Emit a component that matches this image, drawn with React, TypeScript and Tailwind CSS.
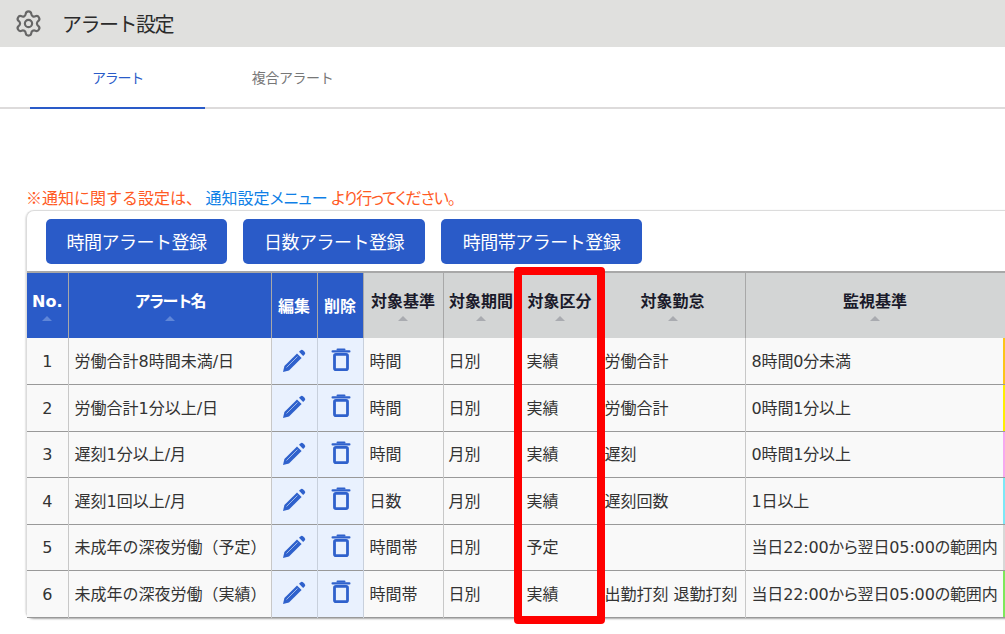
import { Settings } from 'lucide-react'

const rows = [
  { no: 1, name: '労働合計8時間未満/日', basis: '時間', period: '日別', kind: '実績', target: '労働合計', rule: '8時間0分未満', strip: 'bg-[#fcc419]' },
  { no: 2, name: '労働合計1分以上/日', basis: '時間', period: '日別', kind: '実績', target: '労働合計', rule: '0時間1分以上', strip: 'bg-[#ffee00]' },
  { no: 3, name: '遅刻1分以上/月', basis: '時間', period: '月別', kind: '実績', target: '遅刻', rule: '0時間1分以上', strip: 'bg-[#f7a8ee]' },
  { no: 4, name: '遅刻1回以上/月', basis: '日数', period: '月別', kind: '実績', target: '遅刻回数', rule: '1日以上', strip: 'bg-[#7de8f7]' },
  { no: 5, name: '未成年の深夜労働（予定）', basis: '時間帯', period: '日別', kind: '予定', target: '', rule: '当日22:00から翌日05:00の範囲内', strip: 'bg-[#d8d8d8]' },
  { no: 6, name: '未成年の深夜労働（実績）', basis: '時間帯', period: '日別', kind: '実績', target: '出勤打刻 退勤打刻', rule: '当日22:00から翌日05:00の範囲内', strip: 'bg-[#7ee85a]' },
]

const buttons = [
  { label: '時間アラート登録', width: 'w-[181px]' },
  { label: '日数アラート登録', width: 'w-[182px]' },
  { label: '時間帯アラート登録', width: 'w-[201px]' },
]

function PencilIcon() {
  return (
    <svg width="26" height="26" viewBox="0 0 26 26" fill="none">
      <path d="M2 24l1.4-6L16 5.4 20.6 10 8 22.6z" fill="#2f61cc" />
      <path d="M5.5 19.5L16.5 8.5" stroke="#9db8ea" strokeWidth="1" />
      <path d="M18 3.8l1.4-1.4a2 2 0 0 1 2.8 0l1.4 1.4a2 2 0 0 1 0 2.8L22.2 8z" fill="#2f61cc" />
    </svg>
  )
}

function TrashIcon() {
  return (
    <svg width="20" height="26" viewBox="0 0 20 26" fill="none">
      <path d="M1.6 3.4h16.8" stroke="#2f61cc" strokeWidth="2.2" strokeLinecap="round" />
      <path d="M6.5 1.4h7" stroke="#2f61cc" strokeWidth="2" strokeLinecap="round" />
      <rect x="3.5" y="6.4" width="13" height="15.2" rx="1.4" stroke="#2f61cc" strokeWidth="2.8" />
    </svg>
  )
}

function HeadCell({ label, blue, tight }: { label: string; blue?: boolean; tight?: boolean }) {
  return (
    <th
      className={`border-r border-[#a8a8a8] p-0 pt-[18px] align-top text-[16px] font-bold leading-[22px] ${
        blue ? 'bg-[#2a5bc8] text-white' : 'bg-[#d3d5d5] text-[#1a1a2a]'
      }`}
    >
      <div className={`whitespace-nowrap ${tight ? 'tracking-[-2px]' : ''}`}>{label}</div>
      <span
        className={`mx-auto mt-[3px] block h-0 w-0 border-x-[5px] border-b-[5px] border-x-transparent ${
          blue ? 'border-b-[#5f86d8]' : 'border-b-[#a9abb0]'
        }`}
      />
    </th>
  )
}

export default function App() {
  return (
    <div className="relative h-[634px] w-[1005px] overflow-hidden bg-white font-['DejaVu_Sans','Noto_Sans_CJK_JP',sans-serif] text-[#333]">
      <header className="flex h-[47px] items-center gap-[19px] bg-[#e0e0de] pl-[14px]">
        <Settings className="h-[29px] w-[29px] text-[#666]" strokeWidth={1.8} />
        <h1 className="pt-[2px] text-[20px] font-normal tracking-[-1.5px] text-[#2b2b2b]">アラート設定</h1>
      </header>

      <nav className="flex h-[62px] border-b-2 border-[#dddbdb] pl-[30px] text-[14px]">
        <div className="-mb-[2px] flex h-[62px] w-[175px] items-center justify-center border-b-2 border-[#2a5bc8] pt-[2px] tracking-[-1.2px] text-[#2a5bc8]">
          アラート
        </div>
        <div className="flex h-[60px] w-[175px] items-center justify-center pt-[2px] tracking-[-0.4px] text-[#777]">複合アラート</div>
      </nav>

      <section className="pl-[25px] pt-[77px]">
        <p className="pl-px font-['Noto_Sans_CJK_JP',sans-serif] text-[16px] leading-[22px] text-[#ff5a24]">
          ※通知に関する設定は、
          <span className="text-[#0f7fe6] [font-feature-settings:'palt']"> 通知設定メニュー </span>
          <span className="tracking-[-1px] [font-feature-settings:'palt']">より行ってください。</span>
        </p>

        <div className="ml-px mt-[2px] w-[989px] rounded-lg border-l border-t border-[#dcdcdc] shadow-[0_1px_2px_rgba(0,0,0,0.35)]">
          <div className="flex h-[60px] items-start gap-[16px] pl-[19px] pt-[8px]">
            {buttons.map((b) => (
              <button
                key={b.label}
                className={`flex h-[45px] items-center justify-center whitespace-nowrap rounded-[5px] bg-[#2a5bc8] pt-[2px] text-[18px] tracking-[-0.5px] text-white ${b.width}`}
              >
                {b.label}
              </button>
            ))}
          </div>

          <table className="w-[978px] table-fixed border-collapse border-t-2 border-[#a8a8a8] text-[16px]">
            <colgroup>
              <col className="w-[41px]" />
              <col className="w-[203px]" />
              <col className="w-[46px]" />
              <col className="w-[46px]" />
              <col className="w-[80px]" />
              <col className="w-[76px]" />
              <col className="w-[81px]" />
              <col className="w-[145px]" />
              <col className="w-[260px]" />
            </colgroup>
            <thead>
              <tr className="h-[66px]">
                <HeadCell label="No." blue />
                <HeadCell label="アラート名" blue tight />
                <th className="border-r border-[#a8a8a8] bg-[#2a5bc8] p-0 pt-[3px] text-[16px] font-bold text-white">編集</th>
                <th className="border-r border-[#a8a8a8] bg-[#2a5bc8] p-0 pt-[3px] text-[16px] font-bold text-white">削除</th>
                <HeadCell label="対象基準" />
                <HeadCell label="対象期間" />
                <HeadCell label="対象区分" />
                <HeadCell label="対象勤怠" />
                <HeadCell label="監視基準" />
              </tr>
            </thead>
            <tbody>
              {rows.map((r) => (
                <tr key={r.no} className="h-[46.5px] border-b border-[#999] bg-[#f9f9f9] [&>td]:pt-[2px]">
                  <td className="border-r border-[#c8c8c8] p-0 text-center">{r.no}</td>
                  <td className="whitespace-nowrap border-r border-[#c8c8c8] p-0 pl-[6px]">{r.name}</td>
                  <td className="border-r border-[#c8d0dc] bg-[#e9f1fe] p-0">
                    <div className="-mt-[3px] flex justify-center"><PencilIcon /></div>
                  </td>
                  <td className="border-r border-[#c8d0dc] bg-[#e9f1fe] p-0">
                    <div className="-mt-[3px] flex justify-center pl-[1px]"><TrashIcon /></div>
                  </td>
                  <td className="border-r border-[#c8c8c8] p-0 pl-[6px]">{r.basis}</td>
                  <td className="border-r border-[#c8c8c8] p-0 pl-[5px]">{r.period}</td>
                  <td className="border-r border-[#c8c8c8] p-0 pl-[7px]">{r.kind}</td>
                  <td className="whitespace-nowrap border-r border-[#c8c8c8] p-0 pl-[4px]">{r.target}</td>
                  <td className="relative whitespace-nowrap p-0 pl-[6px] tracking-[-0.15px] [font-feature-settings:'palt']">
                    {r.rule}
                    <span className={`absolute inset-y-0 right-0 w-[2px] ${r.strip}`} />
                  </td>
                </tr>
              ))}
            </tbody>
          </table>
        </div>
      </section>

      {/* annotation over the 対象区分 column */}
      <div className="absolute left-[514px] top-[267px] h-[357px] w-[91px] rounded-[4px] border-[8px] border-[#ff0000]" />
    </div>
  )
}
